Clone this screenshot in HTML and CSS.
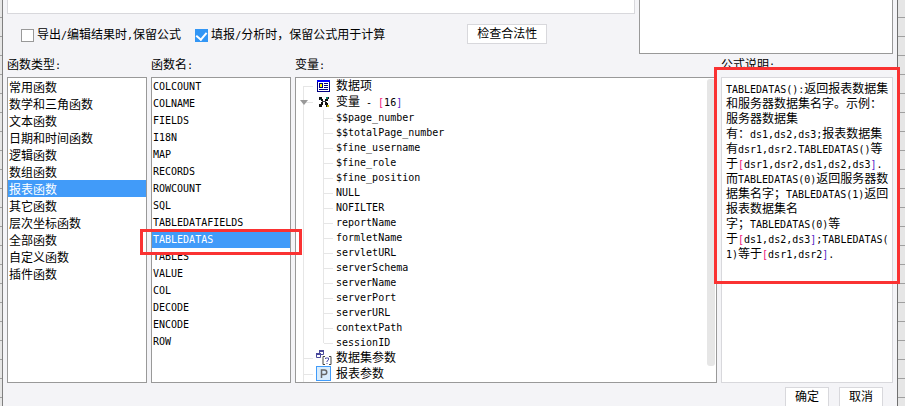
FILE: index.html
```html
<!DOCTYPE html>
<html lang="zh-CN">
<head>
  <meta charset="UTF-8" />
  <meta name="viewport" content="width=device-width, initial-scale=1.0"/>
  <title>公式定义</title>
  <link rel="stylesheet" href="styles.css">
</head>
<body>
  <div class="dialog">
    <div class="top">
      <div class="left">
        <div class="editor"></div>
        <div class="options">
          <label class="check"><input type="checkbox" />导出<span class="mono">/</span>编辑结果时<span class="mono">,</span>保留公式</label>
          <label class="check"><input type="checkbox" checked />填报<span class="mono">/</span>分析时，保留公式用于计算</label>
          <button class="validate">检查合法性</button>
        </div>
      </div>
      <div class="preview"></div>
    </div>

    <div class="columns">
      <div class="column">
        <label class="title" for="types">函数类型<span class="mono">:</span></label>
        <select class="list" id="types" size="12">
          <option>常用函数</option>
          <option>数学和三角函数</option>
          <option>文本函数</option>
          <option>日期和时间函数</option>
          <option>逻辑函数</option>
          <option>数组函数</option>
          <option selected>报表函数</option>
          <option>其它函数</option>
          <option>层次坐标函数</option>
          <option>全部函数</option>
          <option>自定义函数</option>
          <option>插件函数</option>
        </select>
      </div>

      <div class="column">
        <label class="title" for="names">函数名<span class="mono">:</span></label>
        <select class="list names" id="names" size="16">
          <option>COLCOUNT</option>
          <option>COLNAME</option>
          <option>FIELDS</option>
          <option>I18N</option>
          <option>MAP</option>
          <option>RECORDS</option>
          <option>ROWCOUNT</option>
          <option>SQL</option>
          <option>TABLEDATAFIELDS</option>
          <option selected>TABLEDATAS</option>
          <option>TABLES</option>
          <option>VALUE</option>
          <option>COL</option>
          <option>DECODE</option>
          <option>ENCODE</option>
          <option>ROW</option>
        </select>
        <div class="mark mark-name"></div>
      </div>

      <div class="column">
        <div class="title">变量<span class="mono">:</span></div>
        <div class="panel">
          <ul class="tree">
            <li class="node">
              <svg class="icon" width="16" height="16" viewBox="0 0 16 16" shape-rendering="crispEdges">
                <rect x="1" y="2" width="13" height="12" fill="#000080"/>
                <rect x="1" y="2" width="13" height="2" fill="#0000ff"/>
                <rect x="2" y="4" width="11" height="9" fill="#fff"/>
                <rect x="3" y="5" width="4" height="5" fill="#000080"/>
                <rect x="4" y="6" width="2" height="3" fill="#ffff00"/>
                <path d="M8 5h4v1h-4zM8 7h4v1h-4zM8 9h4v1h-4zM3 11h9v1h-9z" fill="#000080"/>
              </svg>
              数据项
            </li>
            <li class="node open">
              <svg class="icon" width="16" height="16" viewBox="0 0 16 16" shape-rendering="crispEdges">
                <path d="M3 3h3v2h1v2h-2v-1h-2zM9 5h1v-2h3v2h-1v2h-3zM5 8h2v3h-1v2h-3v-3h2zM9 8h2v1h1v2h1v2h-3v-2h-1z" fill="#111"/>
                <path d="M6 7h4v1h-4z" fill="#444"/>
                <path d="M10 3h2v2h-2zM4 5h1v1h-1z" fill="#0a7a6a"/>
                <path d="M11 11h2v2h-2z" fill="#b8b000"/>
              </svg>
              变量<span class="mono">&nbsp;-&nbsp;<span class="pink">[</span>16<span class="violet">]</span></span>
            </li>
            <li>
              <ul class="vars">
                <li>$$page_number</li>
                <li>$$totalPage_number</li>
                <li>$fine_username</li>
                <li>$fine_role</li>
                <li>$fine_position</li>
                <li>NULL</li>
                <li>NOFILTER</li>
                <li>reportName</li>
                <li>formletName</li>
                <li>servletURL</li>
                <li>serverSchema</li>
                <li>serverName</li>
                <li>serverPort</li>
                <li>serverURL</li>
                <li>contextPath</li>
                <li>sessionID</li>
              </ul>
            </li>
            <li class="node">
              <svg class="icon" width="16" height="16" viewBox="0 0 16 16">
                <path d="M3.500 .5h4v4h-4zM.5 3.500h4v4h-4z" fill="#fff" stroke="#4a4a9c"/>
                <path d="M3 1h5M0 4h5" stroke="#4a4a9c" stroke-width="2"/>
                <path d="M9 6.500h-2v8h2M13 6.500h2v8h-2" fill="none" stroke="#444"/>
                <path d="M9.500 9v-1h3v2l-1.500 1v1M11 13v1" fill="none" stroke="#5050a8"/>
              </svg>
              数据集参数
            </li>
            <li class="node">
              <svg class="icon" width="16" height="16" viewBox="0 0 16 16">
                <rect x=".5" y=".5" width="14" height="14" fill="#d9ecfc" stroke="#419bf9"/>
                <path d="M5.500 12v-8h3a2 2 0 0 1 0 4.500h-3" fill="none" stroke="#666" stroke-width="1.500"/>
              </svg>
              报表参数
            </li>
          </ul>
          <div class="scrollbar"></div>
        </div>
      </div>

      <div class="column">
        <div class="title">公式说明<span class="mono">:</span></div>
        <div class="panel help">
          <span class="mono">TABLEDATAS():</span>返回报表数据集<br>
          和服务器数据集名字。示例：<br>
          服务器数据集<br>
          有：<span class="mono">ds1,ds2,ds3;</span>报表数据集<br>
          有<span class="mono">dsr1,dsr2.TABLEDATAS()</span>等<br>
          于<span class="mono"><span class="pink">[</span>dsr1,dsr2,ds1,ds2,ds3<span class="violet">]</span>.</span><br>
          而<span class="mono">TABLEDATAS(0)</span>返回服务器数<br>
          据集名字；<span class="mono">TABLEDATAS(1)</span>返回<br>
          报表数据集名<br>
          字；<span class="mono">TABLEDATAS(0)</span>等<br>
          于<span class="mono"><span class="pink">[</span>ds1,ds2,ds3<span class="violet">]</span>;TABLEDATAS(</span><br>
          <span class="mono">1)</span>等于<span class="mono"><span class="pink">[</span>dsr1,dsr2<span class="violet">]</span>.</span>
        </div>
        <div class="mark mark-help"></div>
      </div>
    </div>

    <div class="actions">
      <button>确定</button>
      <button>取消</button>
    </div>
  </div>
</body>
</html>
```

FILE: styles.css
```css
* {
  box-sizing: border-box;
}
body {
  margin: 0;
  padding: 0 7px 0 2px;
  height: 100vh;
  overflow: hidden;
  background: repeating-linear-gradient(#e6e6e6 0 17px, #a0a0a0 17px 18px, #e6e6e6 18px 19px);
  font-family: "Liberation Sans", "Noto Sans CJK SC", sans-serif;
  font-size: 12px;
  line-height: 15px;
  color: #000;
}
ul {
  list-style: none;
  margin: 0;
  padding: 0;
}
.mono {
  font-family: "DejaVu Sans Mono", monospace;
  font-size: 10px;
}
.pink {
  color: #f0147a;
}
.violet {
  color: #5a28c8;
}
.dialog {
  min-height: 100vh;
  padding: 0 4px;
  background: #f4f4f7;
  border-left: 1px solid #808080;
  border-right: 1px solid #707070;
}
.top {
  display: flex;
  gap: 4px;
}
.left {
  flex: 1;
}
.editor {
  height: 14px;
  background: #fff;
  border: 1px solid #d8d8dc;
  border-top: none;
}
.preview {
  width: 254px;
  height: 54px;
  background: #fff;
  border: 1px solid #999;
  border-top: none;
}
.options {
  display: flex;
  align-items: center;
  padding: 10px 0 0 14px;
}
.check {
  display: flex;
  align-items: center;
  margin-right: 14px;
  padding-top: 2px;
  white-space: nowrap;
}
.check input {
  appearance: none;
  width: 13px;
  height: 13px;
  margin: 0 3px 0 0;
  background: #fff;
  border: 1px solid #999;
}
.check input:checked {
  border-color: #3296f5;
  background: #3296f5;
  display: grid;
  place-items: center;
}
.check input:checked::after {
  content: "";
  width: 5px;
  height: 8px;
  margin-bottom: 2px;
  border: solid #fff;
  border-width: 0 2px 2px 0;
  transform: rotate(40deg);
}
button {
  height: 20px;
  padding: 0 9px;
  background: #fff;
  border: 1px solid #d8d8dc;
  font: inherit;
  line-height: 18px;
  color: #000;
}
.validate {
  margin-left: 68px;
}
.columns {
  display: grid;
  grid-template-columns: 140px 140px 1fr 172px;
  gap: 4px;
}
.column {
  position: relative;
}
.title {
  display: block;
  height: 23px;
  padding-top: 4px;
}
.list,
.panel {
  display: block;
  width: 100%;
  height: 306px;
  background: #fff;
  border: 1px solid #999;
}
.list {
  padding: 0;
  border-radius: 0;
  outline: none;
  overflow: hidden;
  font: inherit;
  color: #000;
}
.list option {
  height: 17px;
  min-height: 17px;
  padding: 0 1px;
  line-height: 17px;
}
.list option:checked {
  background: #419bf9 linear-gradient(#419bf9, #419bf9);
  color: #fff;
}
.list.names {
  font-family: "DejaVu Sans Mono", monospace;
  font-size: 10px;
}
.names option {
  padding-top: 3px;
}
.panel {
  position: relative;
}
.tree {
  position: relative;
  padding-left: 20px;
}
.tree::before {
  content: "";
  position: absolute;
  left: 7px;
  top: 8px;
  bottom: 0;
  border-left: 1px solid #e6e6e6;
}
.node {
  position: relative;
  display: flex;
  align-items: center;
  height: 16px;
  white-space: nowrap;
}
.node::before,
.vars li::before {
  content: "";
  position: absolute;
  left: -12px;
  top: 8px;
  width: 9px;
  border-top: 1px solid #e6e6e6;
}
.open::after {
  content: "";
  position: absolute;
  left: -16px;
  top: 6px;
  border: 4px solid transparent;
  border-top: 5px solid #999;
  border-bottom: none;
}
.icon {
  flex: none;
  margin-right: 4px;
}
.vars {
  position: relative;
  padding-left: 20px;
  font-family: "DejaVu Sans Mono", monospace;
  font-size: 10px;
}
.vars::before {
  content: "";
  position: absolute;
  left: 7px;
  top: 0;
  bottom: 7px;
  border-left: 1px solid #e6e6e6;
}
.vars li {
  position: relative;
  height: 15px;
}
.scrollbar {
  position: absolute;
  top: 1px;
  right: 1px;
  width: 8px;
  height: 287px;
  background: #e6e6e6;
  border-radius: 3px;
}
.help {
  padding: 4px;
  border-color: #d8d8dc;
  white-space: nowrap;
}
.mark {
  position: absolute;
  z-index: 1;
  border: 3px solid #fa3232;
}
.mark-name {
  left: -11px;
  right: -11px;
  top: 175px;
  height: 26px;
}
.mark-help {
  left: -7px;
  right: -7px;
  top: 13px;
  height: 217px;
}
.actions {
  display: flex;
  justify-content: flex-end;
  gap: 10px;
  padding: 4px 10px 0 0;
}
```
